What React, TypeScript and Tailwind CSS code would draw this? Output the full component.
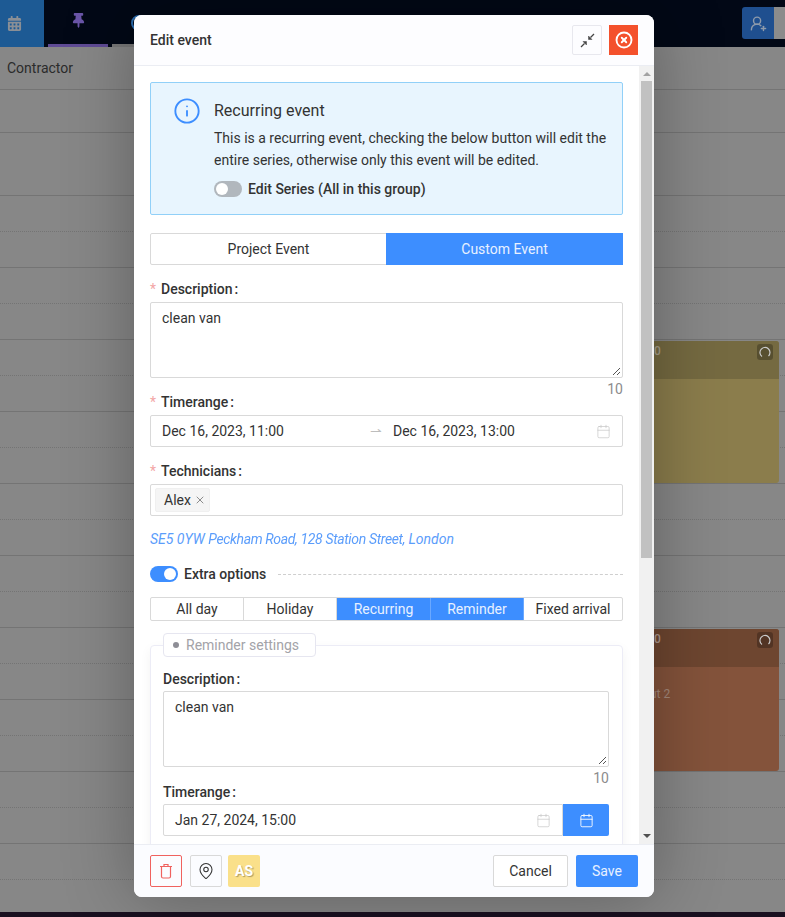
import React from 'react';
import { Calendar, CircleX, Info, MapPin, UserRoundPlus, X } from 'lucide-react';
import { FaCalendarAlt, FaThumbtack } from 'react-icons/fa';

const rowKinds = Array.from({ length: 20 }, (_, i) => i % 2 === 0);

const Label = ({ text, required }: { text: string; required?: boolean }) => (
  <div className="flex items-center h-[22px] pt-[2px] text-sm font-medium text-[#333]">
    {required && <span className="w-[11px] text-[#f3a6a6] font-normal">*</span>}
    <span>{text}</span>
    <span className="ml-[2px]">:</span>
  </div>
);

const Note = ({ text }: { text: string }) => (
  <div className="w-full h-[76px] border border-[#d9d9d9] rounded-[2px] px-[11px] py-[4px] leading-[22px] text-sm text-[#333] relative">
    {text}
    <svg className="absolute right-[1px] bottom-[1px]" width="9" height="9" viewBox="0 0 9 9">
      <path d="M1 8L8 1M5 8L8 5" stroke="#555" strokeWidth="1" />
    </svg>
  </div>
);

const Counter = () => <div className="h-3 text-right text-sm leading-[22px] text-[#8c8c8c]">10</div>;

const Option = ({ text, active, last }: { text: string; active?: boolean; last?: boolean }) => (
  <div
    className={`h-full flex items-center justify-center text-sm ${
      active ? 'bg-[#3d8eff] text-[#e8f1ff] border-r border-[#6aa8ff]' : 'text-[#333]'
    } ${!active && !last ? 'border-r border-[#d9d9d9]' : ''}`}
  >
    {text}
  </div>
);

const Arc = () => (
  <div className="absolute top-[3px] right-[6px] w-4 h-4 rounded-[3px] bg-black/25 flex items-center justify-center">
    <svg width="12" height="12" viewBox="0 0 12 12" fill="none" stroke="#c9c9c9" strokeWidth="1.2">
      <path d="M3 10.5A5 5 0 1 1 9.5 10" />
    </svg>
  </div>
);

const Switch = ({ on }: { on?: boolean }) => (
  <div className={`w-7 h-4 rounded-full flex items-center px-[2px] shrink-0 ${on ? 'bg-[#3d8eff] justify-end' : 'bg-[#b1b7bd] justify-start'}`}>
    <div className="w-3 h-3 rounded-full bg-white" />
  </div>
);

export default function App() {
  return (
    <div className="relative h-[917px] w-[785px] overflow-hidden bg-[#878787] font-['Roboto',sans-serif]">
      {/* Top bar */}
      <header className="h-[47px] bg-[#020816] flex items-start">
        <div className="w-[44px] h-[47px] bg-[#1d5a94] flex items-center pl-[7px] text-[#8a8f96]">
          <FaCalendarAlt size={15} />
        </div>
        <div className="ml-1 w-[60px] h-[47px] border-b-[3px] border-[#5f4b95] flex items-center justify-center text-[#6a55a8] pb-[3px]">
          <FaThumbtack size={15} />
        </div>
        <div className="ml-1 w-[22px] h-[47px] border-b-[3px] border-[#777]">
          <div className="ml-[19px] mt-[15px] w-4 h-4 rounded-full border-2 border-[#2a6cb0]" />
        </div>
        <div className="ml-auto mt-[7px] flex h-8">
          <div className="w-8 h-8 rounded-l-[3px] bg-[#1f4f8f] flex items-center justify-center text-[#8f9bab]">
            <UserRoundPlus size={17} />
          </div>
          <div className="w-[11px] h-8 bg-[#8c8c8c]" />
        </div>
      </header>

      {/* Calendar behind the mask */}
      <div className="h-[43px] px-[7px] flex items-center text-sm text-[#2b2b2b] border-b border-[#747474]">Contractor</div>
      <div className="h-[43px] border-b border-[#747474]" />
      <div className="h-[63px] border-b border-[#747474]" />
      {rowKinds.map((solid, i) => (
        <div key={i} className={`h-9 border-b ${solid ? 'border-dotted border-[#747474]' : 'border-[#747474]'}`} />
      ))}
      <div className="absolute left-0 right-0 bottom-0 h-[5px] bg-[#1a1020]" />

      {/* Event cards */}
      <div className="absolute left-[560px] top-[341px] w-[219px] h-[142px] rounded-[3px] bg-[#8b7d4c] overflow-hidden">
        <div className="h-[38px] bg-[#756a41] flex justify-end" />
        <span className="absolute left-[94px] top-[2px] text-xs font-medium text-[#a8a08a]">0</span>
        <Arc />
      </div>
      <div className="absolute left-[560px] top-[629px] w-[219px] h-[142px] rounded-[3px] bg-[#84533b] overflow-hidden">
        <div className="h-[38px] bg-[#6e4630]" />
        <span className="absolute left-[94px] top-[2px] text-xs font-medium text-[#b09a8e]">0</span>
        <span className="absolute left-[90px] top-[57px] text-xs text-[#a58a7c]">ut 2</span>
        <Arc />
      </div>

      {/* Modal */}
      <div className="absolute left-[134px] top-[15px] w-[520px] h-[882px] rounded-[8px] bg-white overflow-hidden flex flex-col shadow-[0_0_70px_rgba(0,0,0,0.3)]">
        <div className="h-[51px] shrink-0 flex items-center px-4 border-b border-[#ebedf3] bg-[#fdfdff]">
          <span className="text-sm font-medium text-[#333]">Edit event</span>
          <div className="ml-auto flex items-center gap-[7px]">
            <div className="w-[30px] h-[30px] border border-[#e8e8ee] rounded-[2px] flex items-center justify-center">
              <svg width="15" height="15" viewBox="0 0 15 15" fill="#444" stroke="#444" strokeWidth="1.2">
                <path d="M14 1L10.5 4.5" />
                <path d="M8.5 6.5V3L12 6.5Z" strokeWidth="0.5" />
                <path d="M1 14L4.5 10.5" />
                <path d="M6.5 8.5V12L3 8.5Z" strokeWidth="0.5" />
              </svg>
            </div>
            <div className="w-[29px] h-[30px] bg-[#f4512c] flex items-center justify-center text-white">
              <CircleX size={18} strokeWidth={2.5} />
            </div>
          </div>
        </div>

        <div className="flex-1 min-h-0 flex">
          <div className="flex-1 min-w-0 overflow-hidden px-4 pt-4">
            <div className="h-[133px] border border-[#91d0f8] bg-[#e8f5fe] rounded-[2px] flex pl-6 pt-4">
              <Info size={28} strokeWidth={1.6} className="text-[#3d8eff] -mt-[2px] -ml-[2px]" />
              <div className="ml-[13px] w-[400px]">
                <div className="text-base leading-6 text-[#333]">Recurring event</div>
                <p className="mt-[4px] text-sm leading-[22px] text-[#333]">
                  This is a recurring event, checking the below button will edit the entire series, otherwise only this event will be edited.
                </p>
                <div className="mt-2 flex items-center gap-[6px] text-sm font-medium text-[#333]">
                  <Switch />
                  Edit Series (All in this group)
                </div>
              </div>
            </div>

            <div className="mt-[18px] h-8 flex border border-[#d9d9d9] rounded-[2px] text-sm">
              <div className="w-[235px] flex items-center justify-center text-[#333]">Project Event</div>
              <div className="flex-1 -my-[1px] -mr-[1px] bg-[#3d8eff] text-[#e8f1ff] flex items-center justify-center">Custom Event</div>
            </div>

            <div className="mt-3 mb-[3px]"><Label text="Description" required /></div>
            <Note text="clean van" />
            <Counter />

            <div className="mb-[3px]"><Label text="Timerange" required /></div>
            <div className="h-8 border border-[#d9d9d9] rounded-[2px] flex items-center text-sm text-[#333] pl-[11px] pr-[11px]">
              <span className="w-[208px]">Dec 16, 2023, 11:00</span>
              <span className="w-[23px] text-[#bdbdbd]">⇀</span>
              <span>Dec 16, 2023, 13:00</span>
              <Calendar size={15} strokeWidth={1.1} className="ml-auto text-[#c4c4c4]" />
            </div>

            <div className="mt-3 mb-[3px]"><Label text="Technicians" required /></div>
            <div className="h-8 border border-[#d9d9d9] rounded-[2px] flex items-center pl-1">
              <div className="h-6 w-[55px] bg-[#f5f5f5] border border-[#f0f0f0] rounded-[2px] flex items-center pl-2 text-sm text-[#333]">
                Alex
                <X size={12} className="ml-[3px] text-[#8c8c8c]" />
              </div>
            </div>

            <div className="mt-3 h-[22px] text-sm italic leading-[22px] text-[#5b9dfb] whitespace-nowrap">
              SE5 0YW <span className="blur-[0.7px] tracking-[-0.35px]">Peckham Road, 128 Station Street,</span> London
            </div>

            <div className="mt-[13px] flex items-center h-[22px]">
              <Switch on />
              <span className="ml-[6px] text-sm font-medium text-[#333]">Extra options</span>
              <div className="ml-3 flex-1 border-t border-dashed border-[#cfcfcf]" />
            </div>

            <div className="mt-3 h-6 grid grid-cols-[93px_93px_94px_93px_1fr] border border-[#d9d9d9] rounded-[2px]">
              <Option text="All day" />
              <Option text="Holiday" />
              <Option text="Recurring" active />
              <Option text="Reminder" active />
              <Option text="Fixed arrival" last />
            </div>

            <div className="relative mt-6 h-[400px] border border-[#ececf6] rounded-[4px] pl-3 pr-[13px] pt-[21px] shadow-[0_4px_12px_rgba(0,0,0,0.05)]">
              <div className="absolute left-3 -top-[13px] h-6 w-[153px] bg-white border border-[#e6e6f0] rounded-[4px] flex items-center pl-[9px] text-sm text-[#a3a3a8]">
                <span className="w-[6px] h-[6px] rounded-full bg-[#8e8e96] mr-[7px]" />
                Reminder settings
              </div>
              <div className="mb-[2px]"><Label text="Description" /></div>
              <Note text="clean van" />
              <Counter />
              <div className="mt-[1px] mb-[2px]"><Label text="Timerange" /></div>
              <div className="h-8 flex">
                <div className="flex-1 border border-[#d9d9d9] rounded-l-[2px] flex items-center pl-[11px] pr-[11px] text-sm text-[#333]">
                  Jan 27, 2024, 15:00
                  <Calendar size={15} strokeWidth={1.1} className="ml-auto text-[#c4c4c4]" />
                </div>
                <div className="w-[46px] bg-[#3d8eff] rounded-r-[2px] flex items-center justify-center text-white">
                  <Calendar size={15} strokeWidth={1.4} />
                </div>
              </div>
            </div>
          </div>

          {/* Scrollbar */}
          <div className="w-[15px] shrink-0 bg-[#f1f1f1] flex flex-col items-center">
            <div className="h-4 flex items-center justify-center">
              <div className="w-0 h-0 border-x-[4px] border-x-transparent border-b-[4px] border-b-[#a3a3a3]" />
            </div>
            <div className="w-[11px] h-[477px] bg-[#c1c1c1] -mt-[1px]" />
            <div className="mt-auto h-4 flex items-center justify-center">
              <div className="w-0 h-0 border-x-[4px] border-x-transparent border-t-[4px] border-t-[#505050]" />
            </div>
          </div>
        </div>

        <div className="h-[53px] shrink-0 border-t border-[#ebedf3] bg-[#fbfcff] flex items-center px-4">
          <div className="w-8 h-8 border border-[#f0625f] rounded-[2px] flex items-center justify-center">
            <svg width="14" height="16" viewBox="0 0 14 16" fill="none" stroke="#f0625f" strokeWidth="1.2">
              <path d="M1 3.5H13M5 3.5V1.5H9V3.5M2.5 3.5V13.5A1.5 1.5 0 0 0 4 15H10A1.5 1.5 0 0 0 11.5 13.5V3.5" />
            </svg>
          </div>
          <div className="ml-2 w-8 h-8 border border-[#d9d9d9] rounded-[2px] flex items-center justify-center text-[#333]">
            <MapPin size={18} strokeWidth={1.4} />
          </div>
          <div className="ml-[6px] w-8 h-8 bg-[#fae08a] rounded-[2px] flex items-center justify-center text-sm font-bold text-white [text-shadow:1px_1px_1px_rgba(0,0,0,0.3)]">
            AS
          </div>
          <div className="ml-auto w-[75px] h-8 border border-[#d9d9d9] rounded-[2px] bg-white flex items-center justify-center text-sm text-[#333]">Cancel</div>
          <div className="ml-2 w-[62px] h-8 bg-[#3d8eff] rounded-[2px] flex items-center justify-center text-sm text-[#e8f1ff]">Save</div>
        </div>
      </div>
    </div>
  );
}
